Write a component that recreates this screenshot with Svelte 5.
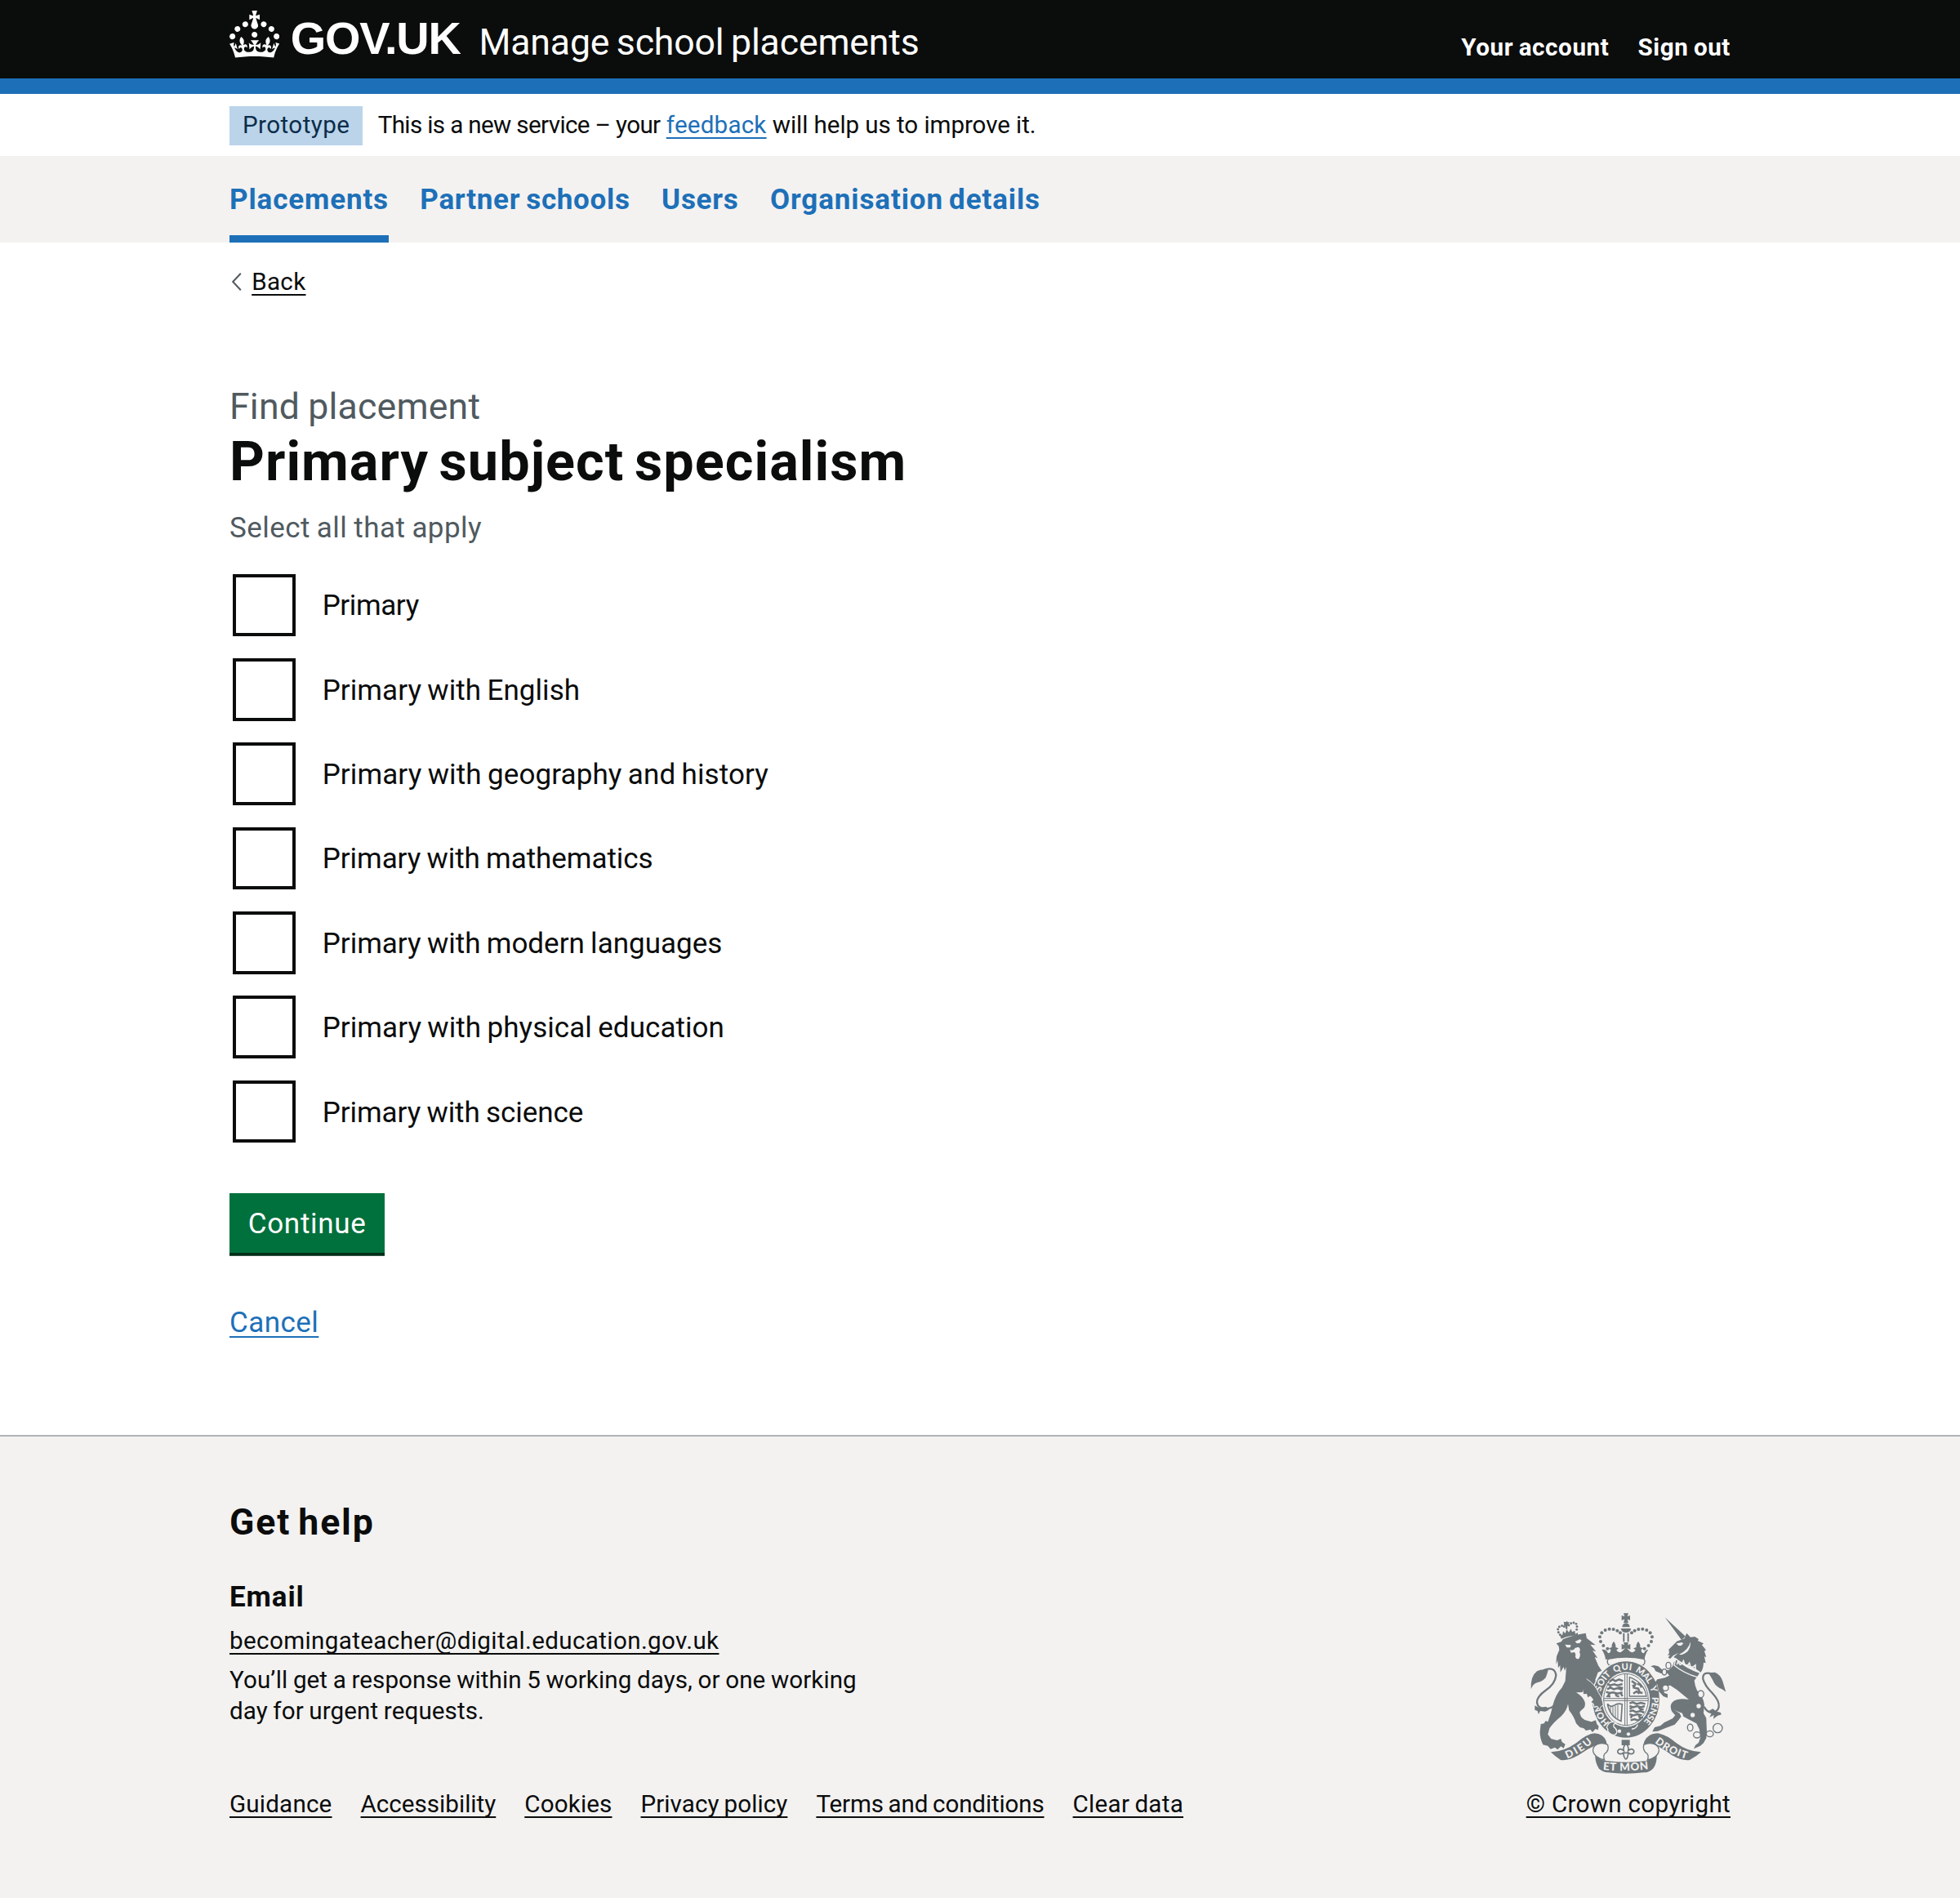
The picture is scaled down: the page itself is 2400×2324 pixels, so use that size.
<script>
  const accountLinks = ['Your account', 'Sign out'];

  // tracking: letter spacing in px, tuned per string
  const sections = [
    { label: 'Placements', tracking: 0.86, current: true },
    { label: 'Partner schools', tracking: 0.7 },
    { label: 'Users', tracking: 0.75 },
    { label: 'Organisation details', tracking: 0.88 }
  ];

  const specialisms = [
    { label: 'Primary', tracking: -0.4 },
    { label: 'Primary with English', tracking: 0.06 },
    { label: 'Primary with geography and history', tracking: 0.1 },
    { label: 'Primary with mathematics', tracking: -0.05 },
    { label: 'Primary with modern languages', tracking: 0 },
    { label: 'Primary with physical education', tracking: 0.06 },
    { label: 'Primary with science', tracking: -0.06 }
  ];

  const footerLinks = [
    { label: 'Guidance', tracking: 0.19 },
    { label: 'Accessibility', tracking: 0.01 },
    { label: 'Cookies', tracking: 0.15 },
    { label: 'Privacy policy', tracking: 0.07 },
    { label: 'Terms and conditions', tracking: -0.15 },
    { label: 'Clear data', tracking: 0.27 }
  ];

  // beads along the arches of the royal crown; mirrored about x = 453
  const beads = [
    [385, 175], [370, 164], [360, 149], [357, 132], [364, 117], [377, 107], [392, 103], [407, 104], [421, 109], [432, 117]
  ];
  const lionBeads = [
    [211, 124], [205, 115], [203, 104], [208, 95], [218, 91], [226, 94], [243, 89], [251, 82], [261, 80], [270, 84], [273, 94], [272, 105]
  ];
</script>

<div class="page">
  <header class="header">
    <div class="container header-row">
      <a class="logo" href="#home" aria-label="GOV.UK">
        <svg class="crown" viewBox="0 0 32 30" aria-hidden="true">
          <path fill="currentColor" d="M22.6 10.4c-1 .4-2-.1-2.4-1-.4-.9.1-2 1-2.4.9-.4 2 .1 2.4 1s-.1 2-1 2.4m-5.9 6.7c-.9.4-2-.1-2.4-1-.4-.9.1-2 1-2.4.9-.4 2 .1 2.4 1s-.1 2-1 2.4m10.8-3.7c-1 .4-2-.1-2.4-1-.4-.9.1-2 1-2.4.9-.4 2 .1 2.4 1s0 2-1 2.4m3.3 4.8c-1 .4-2-.1-2.4-1-.4-.9.1-2 1-2.4.9-.4 2 .1 2.4 1s-.1 2-1 2.4M17 4.7l2.3 1.2V2.5l-2.3.7-.2-.2.9-3h-3.4l.9 3-.2.2c-.1.1-2.3-.7-2.3-.7v3.4L15 4.7c.1.1.1.2.2.2l-1.3 4c-.1.2-.1.4-.1.6 0 1.1.8 2 1.9 2.2h.7c1-.2 1.9-1.1 1.9-2.1 0-.2 0-.4-.1-.6l-1.3-4c-.1-.2 0-.2.1-.3m-7.6 5.7c.9.4 2-.1 2.4-1 .4-.9-.1-2-1-2.4-.9-.4-2 .1-2.4 1s0 2 1 2.4m-5 3c.9.4 2-.1 2.4-1 .4-.9-.1-2-1-2.4-.9-.4-2 .1-2.4 1s.1 2 1 2.4m-3.2 4.8c.9.4 2-.1 2.4-1 .4-.9-.1-2-1-2.4-.9-.4-2 .1-2.4 1s0 2 1 2.4m14.8 11c4.4 0 8.6.3 12.3.8 1.1-4.5 2.4-7 3.7-8.8l-2.5-.9c.2 1.3.3 1.9 0 2.7-.4-.4-.8-1.1-1.1-2.3l-1.2 4c.7-.5 1.3-.8 2-.9-1.1 2.5-2.6 3.1-3.5 3-1.1-.2-1.7-1.2-1.5-2.1.3-1.2 1.5-1.5 2.1-.1 1.1-2.3-.8-3-2-2.3 1.9-1.9 2.1-3.5.6-5.6-2.1 1.6-2.1 3.2-1.2 5.5-1.2-1.4-3.2-.6-2.5 1.6.9-1.4 2.1-.5 1.9.8-.2 1.1-1.7 2.1-3.5 1.9-2.7-.2-2.9-2.1-2.9-3.6.7-.1 1.9.5 2.9 1.9l.4-4.3c-1.1 1.1-2.1 1.4-3.2 1.4.4-1.2 2.1-3 2.1-3h-5.4s1.7 1.9 2.1 3c-1.1 0-2.1-.2-3.2-1.4l.4 4.3c1-1.4 2.2-2 2.9-1.9-.1 1.5-.2 3.4-2.9 3.6-1.9.2-3.4-.8-3.5-1.9-.2-1.3 1-2.2 1.9-.8.7-2.3-1.2-3-2.5-1.6.9-2.2.9-3.9-1.2-5.5-1.5 2-1.3 3.7.6 5.6-1.2-.7-3.1 0-2 2.3.6-1.4 1.8-1.1 2.1.1.2.9-.3 1.9-1.5 2.1-.9.2-2.4-.5-3.5-3 .6 0 1.2.3 2 .9l-1.2-4c-.3 1.1-.7 1.9-1.1 2.3-.3-.8-.2-1.4 0-2.7l-2.9.9C1.3 23 2.6 25.5 3.7 30c3.7-.5 7.9-.8 12.3-.8" />
        </svg>
        <span class="wordmark">GOV.UK</span>
      </a>
      <a class="service" href="#service">Manage school placements</a>
      <nav class="account">
        {#each accountLinks as link}
          <a href="#account">{link}</a>
        {/each}
      </nav>
    </div>
  </header>

  <div class="container phase">
    <strong class="tag">Prototype</strong>
    <span class="phase-text"><span class="phase-a">This is a new service – your</span> <a class="link feedback" href="#feedback">feedback</a> will help us to improve it.</span>
  </div>

  <nav class="sections">
    <div class="container sections-row">
      {#each sections as s}
        <a class="section" class:current={s.current} href="#section" style:letter-spacing="{s.tracking}px">{s.label}</a>
      {/each}
    </div>
  </nav>

  <div class="container body">
    <div class="back">
      <svg class="chevron" viewBox="0 0 13 22" aria-hidden="true"><path d="M11.8 0.8 2.2 11l9.6 10.2" fill="none" stroke="#505a5f" stroke-width="2" /></svg>
      <a class="link dark" href="#back">Back</a>
    </div>

    <main>
      <span class="caption">Find placement</span>
      <h1>Primary subject specialism</h1>
      <p class="hint">Select all that apply</p>

      <div class="options">
        {#each specialisms as s}
          <label class="option">
            <input type="checkbox" />
            <span class="option-label" style:letter-spacing="{s.tracking}px">{s.label}</span>
          </label>
        {/each}
      </div>

      <button type="button">Continue</button>
      <p class="cancel"><a class="link" href="#cancel">Cancel</a></p>
    </main>
  </div>

  <footer>
    <div class="container footer-row">
      <div class="footer-main">
        <h2>Get help</h2>
        <h3>Email</h3>
        <p class="email"><a class="link dark" href="#email">becomingateacher@digital.education.gov.uk</a></p>
        <p class="response">You’ll get a response within 5 working days, or one working day for urgent requests.</p>
        <nav class="footer-links">
          {#each footerLinks as l}
            <a class="link dark" href="#footer" style:letter-spacing="{l.tracking}px">{l.label}</a>
          {/each}
        </nav>
      </div>

      <div class="copyright">
        <svg class="crest" viewBox="102 44 718 590" aria-hidden="true">
          <defs>
            <path id="garter" d="M453 471A96 109 0 0 1 357 362A96 109 0 0 1 453 253A96 109 0 0 1 549 362A96 109 0 0 1 453 471" />
            <path id="scroll-left" d="M237 579Q290 558 334 517" />
            <path id="scroll-mid" d="M368 620Q453 628 540 617" />
            <path id="scroll-right" d="M558 520Q609 562 675 580" />
          </defs>

          <!-- royal crown -->
          <g fill="#6f777b">
            <path d="M444 45h18l-4 12 10-4v18l-10-4 4 13h-18l4-13-11 4V53l11 4z" />
            <path d="M439 96q1-13 14-15q13 2 14 15z" />
            <path d="M434 101h38q-3 15-19 15t-19-15z" />
            {#each beads as [x, y]}
              <circle cx={x} cy={y} r="6" />
              <circle cx={906 - x} cy={y} r="6" />
            {/each}
            <path d="M442 118h6v32h-6zM458 118h6v32h-6z" />
            <path d="M371 178q12 2 16 14q10 0 10-13l-8-5 12-4q-2-10 7-22q9 12 7 22l11 4-8 6q6 14 20 6l12-12-13 4v-20l10 4-3-10h18l-3 10 10-4v20l-13-4 12 12q14 8 20-6l-8-6 11-4q-2-10 7-22q9 12 7 22l12 4-8 5q0 13 10 13q4-12 16-14q-13 20-14 37q-71-14-143 0q-1-17-14-37z" />
          </g>
          <path d="M388 213q65-14 131 0q8 12-3 23q-62-18-125 0q-11-11-3-23z" fill="#f3f2f1" stroke="#6f777b" stroke-width="4" />

          <!-- lion supporter -->
          <g fill="#6f777b">
            <path d="M215 139l-6-18 10 5 3-15 8 8 5-15 8 11 8-13 4 12 10-5 2 12 9-5v12q-30-3-61 11z" />
            <path d="M224 76l8 2 4-4 4 4 6 0-4 6 2 6-6 1 0 12-6 0-2-12-6 0 2-6z" />
            {#each lionBeads as [x, y]}
              <circle cx={x} cy={y} r="4.4" />
            {/each}
            <path d="M197 156L215 150L222 140Q262 124 305 118L309 137L320 145L341 162L322 160L343 186L330 182L349 210L338 206L352 238L364 256L350 262L340 290L352 320L300 335L270 336Q296 352 302 372Q306 390 290 400L283 408Q284 428 302 437L326 444L342 438L346 452L353 460L350 474L341 470L330 482L322 472L306 476L298 468L284 464L270 450Q262 424 244 402L240 378Q236 404 214 424Q186 446 172 468L166 490L178 506L200 512L214 506L218 518L230 526L224 541L214 534L202 546L192 538L176 544L166 532L148 528Q136 502 137 478L140 452L152 450L158 440L166 444Q178 414 184 384Q194 344 218 318L230 294L234 242L228 256L224 242L212 262L211 236L204 246L202 218L196 232L198 204L208 180L206 166z" />
            <path d="M104 324q-2-48 22-66q18-10 41-4q-4 16-9 28q-12 14-29 17q-18 4-25 25z" />
            <path d="M118 384l15 8 27-4 10 12-14 6-18-2-6 12-4-12-10-4z" />
          </g>
          <path d="M150 254q43-16 46 20q-4 32-38 54q-34 24-32 46q4 22 32 22q22-2 33-14" fill="none" stroke="#6f777b" stroke-width="7" />
          <g fill="#f3f2f1">
            <path d="M229 160l22 2-3 9-12 0zM266 149l17-8 7 3-6 10-11 2z" />
            <path d="M247 178q10 8 20-6l12-3q9 8 3 18q6 12-2 25q-9 4-13-7q3-12-4-17l-12 2z" />
          </g>

          <!-- garter and quartered shield -->
          <ellipse cx="453" cy="362" rx="125" ry="142" fill="#6f777b" stroke="#f3f2f1" stroke-width="4" />
          <ellipse cx="453" cy="362" rx="88" ry="101" fill="#f3f2f1" />
          <ellipse cx="453" cy="362" rx="82" ry="95" fill="none" stroke="#6f777b" stroke-width="3" />
          <path d="M449 268v188M457 268v188M371 358h164M371 366h164" stroke="#6f777b" stroke-width="3" />
          <g fill="none" stroke="#6f777b" stroke-width="7.5">
            <path d="M392 296l12-8 10 6 14-6 14 6M384 304l10 6 16-4 12 4 18-5M400 308l-6 10M424 308l6 10 12 2" />
            <path d="M384 324l12-6 12 6 14-4 18 6M380 334l12 4 14-2 16 4 18-4M394 338l-8 12 10 1M414 338l4 10 10 3M434 338l6 12" />
            <path d="M466 376l12-4 14 6 16-4 16 4M466 386l14 4 14-4 14 4 14-4M474 390l-6 8M500 390l6 8 12 0" />
            <path d="M466 406l12-4 12 6 16-4 14 6M466 416l14 4 16-4 16 4M476 420l-6 10M500 420l4 9 12 0M470 438l14-4 12 4 12-5" />
            <path d="M474 294l14 10-6 14 16 4 6 14 10 2M476 312l10-2M494 304l12 4 4 10M480 340l12-8 10 8" />
          </g>
          <path d="M466 280v70h62q-8-50-62-70z" fill="none" stroke="#6f777b" stroke-width="4" />
          <path d="M385 378q10 14 24 6q14-10 30-5l-4 62q-18-6-32-22q-14-18-18-41z" fill="none" stroke="#6f777b" stroke-width="5" />
          <path d="M396 388l0 22M405 388v32M414 386v42M423 382v50" stroke="#6f777b" stroke-width="3" />

          <g class="motto" fill="#f3f2f1" font-size="33">
            <text><textPath href="#garter" startOffset="66">HON</textPath></text>
            <text><textPath href="#garter" startOffset="190" textLength="74">SOIT</textPath></text>
            <text><textPath href="#garter" startOffset="278" textLength="64">QUI</textPath></text>
            <text><textPath href="#garter" startOffset="356" textLength="68">MAL</textPath></text>
            <text><textPath href="#garter" startOffset="436">Y</textPath></text>
            <text><textPath href="#garter" startOffset="474" textLength="98">PENSE</textPath></text>
          </g>
          <path d="M388 452q12-14 28-4q-10 4-8 14q10 6 12 18q-2 12-14 12q-16-4-20-16q2-6-4-12z" fill="#6f777b" stroke="#f3f2f1" stroke-width="4" />
          <path d="M474 470q16 0 22-16" fill="none" stroke="#f3f2f1" stroke-width="4" />
          <circle cx="429" cy="478" r="6.5" fill="#f3f2f1" />
          <circle cx="462" cy="489" r="6.5" fill="#f3f2f1" />

          <!-- lion's paw over the garter -->
          <path d="M290 300L308 286Q340 306 352 336L364 356L370 382L361 388L356 398L347 386L336 390L334 378L324 372L332 362L322 350L312 356L308 342L296 344z" fill="#6f777b" stroke="#f3f2f1" stroke-width="3" />
          <path d="M270 250L310 288L294 332L266 326z" fill="#6f777b" />

          <!-- unicorn supporter -->
          <g fill="#6f777b">
            <path d="M596 60L672 130L657 143z" />
            <path d="M610 178L640 148L668 138L676 118L690 133L706 131L720 140L717 146L738 156L732 162L747 180L741 184L748 206L741 204L746 228L738 226Q738 248 728 262Q712 248 690 240L660 226L628 206Q634 200 646 190L626 201L616 212L608 208L615 198L606 200L612 190z" />
            <path d="M630 222Q670 252 722 268L704 292Q706 310 714 328Q736 348 741 380L738 412L748 430L750 480L748 504L738 522L726 532L702 543L708 530L720 520L727 500L722 470L712 450L686 436L664 424L660 412Q634 404 622 396L650 412L656 424L646 438L632 454L596 468L570 478L550 480L558 464L580 458L594 446L624 432L634 420L622 406Q610 382 628 368Q646 356 684 362L640 326L616 310L602 312L592 326L594 338L606 342L606 356L590 350L574 332L568 306L558 302L568 288L596 282L612 274L606 266L582 266L562 258L556 246L544 240L556 236L572 240L588 254L610 254L624 240z" />
            <path d="M756 264l24-2q20 8 28 32l12 40q-10-10-24-15q-18-10-24-28z" />
            <path d="M772 396l14 10 14 3 4 8-14 4-16 12 2-14-16 8 8-16-10-8z" />
          </g>
          <path d="M770 268q-36-12-34 18q6 24 34 52q28 30 24 52q-4 16-20 20q-22 2-34-22" fill="none" stroke="#6f777b" stroke-width="7" />
          <path d="M638 156l20-4 6 4-8 8-10 0zM690 150q2 38-34 48l-8-2q34-14 42-46z" fill="#f3f2f1" />
          <path d="M636 212q36 34 90 52l-10 16q-50-14-86-44z" fill="#6f777b" stroke="#f3f2f1" stroke-width="4" />
          <path d="M640 234l4-12 8 12 8-4 4-10 6 16 10 0 6-8 4 14 10 0 8-6 0 14" fill="none" stroke="#f3f2f1" stroke-width="5" />
          <g fill="#f3f2f1" stroke="#6f777b" stroke-width="4">
            <ellipse cx="609" cy="237" rx="9" ry="12" />
            <ellipse cx="594" cy="261" rx="8" ry="11" />
            <ellipse cx="598" cy="319" rx="11" ry="11" />
            <ellipse cx="728" cy="342" rx="11" ry="13" />
            <ellipse cx="689" cy="465" rx="10" ry="13" />
            <ellipse cx="714" cy="492" rx="13" ry="11" />
            <ellipse cx="761" cy="488" rx="13" ry="11" />
            <circle cx="790" cy="467" r="17" />
          </g>
          <circle cx="720" cy="386" r="8" fill="#f3f2f1" />
          <circle cx="698" cy="419" r="8" fill="#f3f2f1" />

          <!-- motto scroll -->
          <g fill="#6f777b">
            <path d="M177 555q50-2 94-34q38-32 66-35q42 4 46 42q-22-10-38 0q-34 16-66 38q-38 22-66 18q-20-12-36-29z" />
            <path d="M729 555q-50-2-92-34q-38-32-70-35q-42 4-50 42q22-10 42 0q34 16 62 38q38 22 66 18q24-12 42-29z" />
            <path d="M340 562q12 22 44 26q68 8 140 0q30-6 42-26q2 34-14 54q-14 14-34 14q-66 8-130 0q-20-2-34-14q-16-24-14-54z" />
          </g>
          <g fill="#f3f2f1" stroke="#6f777b" stroke-width="4">
            <path d="M386 528q6 22-10 32q-8 8-2 24q-38-10-42-32q-2-18 16-26q20-8 38 2z" />
            <path d="M518 528q-4 22 12 32q8 8 2 24q38-10 42-32q2-18-16-26q-20-8-40 2z" />
          </g>
          <g class="motto" fill="#f3f2f1">
            <text font-size="38"><textPath href="#scroll-left" textLength="110">DIEU</textPath></text>
            <text font-size="40"><textPath href="#scroll-mid" textLength="168">ET MON</textPath></text>
            <text font-size="38"><textPath href="#scroll-right" textLength="132">DROIT</textPath></text>
          </g>

          <!-- badge -->
          <path d="M437 510h30v20h-30z" fill="#6f777b" />
          <path d="M453 524q12 12 8 26q14-12 21 0q2 10-8 12q-8 0-12-4l-3 14q-6 18-13 0l-3-14q-4 4-12 4q-10-2-8-12q7-12 22 0q-4-14 8-26z" fill="#f3f2f1" stroke="#6f777b" stroke-width="5" />
          <path d="M441 558h24" stroke="#6f777b" stroke-width="5" />
        </svg>
        <a class="link dark crown-copyright" href="#copyright">© Crown copyright</a>
      </div>
    </div>
  </footer>
</div>

<style>
  :global(body) {
    margin: 0;
    background: #fff;
  }
  .page {
    display: flex;
    flex-direction: column;
    min-height: 2324px;
    color: #0b0c0c;
    font-family: Roboto, "Liberation Sans", sans-serif;
    font-size: 29.6px;
    font-kerning: normal;
  }
  .container {
    box-sizing: border-box;
    width: 1838px;
    margin: 0 auto;
  }
  a {
    color: inherit;
    text-decoration: none;
  }
  p, h1, h2, h3 {
    margin: 0;
  }
  .link {
    color: #1d70b8;
    text-decoration: underline;
    text-decoration-thickness: 2px;
    text-decoration-skip-ink: none;
    text-underline-offset: 5px;
  }
  .link.dark {
    color: #0b0c0c;
  }

  .header {
    background: #0b0c0c;
    border-bottom: 19px solid #1d70b8;
    color: #fff;
  }
  .header-row {
    display: flex;
    align-items: flex-start;
    height: 96px;
  }
  .logo {
    display: flex;
    gap: 13.4px;
    padding-top: 13px;
  }
  .crown {
    width: 61.3px;
    height: 57.5px;
  }
  .wordmark {
    padding-top: 4px;
    font: 700 55.9px/60px "Liberation Sans", sans-serif;
    letter-spacing: -1.24px;
  }
  .service {
    margin-left: 22.8px;
    padding-top: 31.5px;
    font-size: 44.6px;
    line-height: 40px;
    letter-spacing: -0.15px;
    word-spacing: -2.4px;
  }
  .account {
    display: flex;
    gap: 35px;
    margin-left: auto;
    padding-top: 40px;
    font-weight: 700;
    line-height: 36px;
    letter-spacing: 0.6px;
    word-spacing: -1.4px;
  }

  .phase {
    display: flex;
    align-items: center;
    gap: 19.2px;
    height: 76px;
    padding-top: 1px;
  }
  .tag {
    box-sizing: border-box;
    width: 162.5px;
    height: 48px;
    padding-left: 16px;
    background: #bbd4ea;
    color: #0c2d4a;
    font-weight: 400;
    line-height: 47px;
    letter-spacing: 0.42px;
  }
  .phase-text {
    line-height: 47px;
    padding-bottom: 1px;
    letter-spacing: -0.08px;
  }
  .phase-a {
    letter-spacing: -0.64px;
  }
  .feedback {
    letter-spacing: 0.2px;
  }

  .sections {
    background: #f3f2f1;
  }
  .sections-row {
    display: flex;
    gap: 38.4px;
    height: 105.6px;
  }
  .section {
    box-sizing: border-box;
    height: 105.6px;
    padding-top: 11.4px;
    border-bottom: 9.6px solid transparent;
    color: #1d70b8;
    font-size: 35px;
    font-weight: 700;
    line-height: 86px;
    word-spacing: -2.4px;
  }
  .section.current {
    border-bottom-color: #1d70b8;
  }

  .back {
    display: flex;
    align-items: center;
    padding: 30.4px 0 0 2px;
    line-height: 36px;
    letter-spacing: 0.32px;
  }
  .chevron {
    width: 13px;
    height: 22px;
    margin-right: 12.2px;
  }

  main {
    padding-top: 110.5px;
  }
  .caption {
    display: block;
    color: #505a5f;
    font-size: 44.6px;
    line-height: 50px;
    letter-spacing: 0.2px;
    word-spacing: -1px;
  }
  h1 {
    margin-top: 9px;
    font-size: 66.6px;
    line-height: 66px;
    letter-spacing: 1.04px;
    word-spacing: -5px;
  }
  .hint {
    margin-top: 25px;
    color: #505a5f;
    font-size: 35px;
    line-height: 48px;
    letter-spacing: 0.43px;
    word-spacing: -1px;
  }
  .options {
    display: flex;
    flex-direction: column;
    gap: 19.15px;
    margin-top: 27.3px;
  }
  .option {
    display: flex;
    align-items: center;
    gap: 33.2px;
    height: 84.23px;
    font-size: 35px;
  }
  .option-label {
    padding-top: 2px;
    word-spacing: -1.4px;
  }
  input {
    appearance: none;
    box-sizing: border-box;
    width: 76.5px;
    height: 76.5px;
    margin: 0 0 0 4px;
    border: 4px solid #0b0c0c;
    background: #fff;
  }
  button {
    display: block;
    height: 72.7px;
    margin: 58px 0 0;
    padding: 2.6px 22.7px 0;
    border: 0;
    background: #00703c;
    box-shadow: 0 3.8px 0 #002d18;
    color: #fff;
    font: 400 35px/70px Roboto, "Liberation Sans", sans-serif;
    letter-spacing: 0.71px;
  }
  .cancel {
    margin-top: 62.2px;
    font-size: 35px;
    line-height: 48px;
    letter-spacing: 0.46px;
  }

  footer {
    flex: 1;
    margin-top: 112.8px;
    border-top: 2px solid #b1b4b6;
    background: #f3f2f1;
  }
  .footer-row {
    display: flex;
    justify-content: space-between;
    align-items: flex-end;
    padding-top: 80.6px;
  }
  h2 {
    font-size: 44.6px;
    line-height: 50px;
    letter-spacing: 1.9px;
    word-spacing: -4px;
  }
  h3 {
    margin-top: 43px;
    font-size: 35px;
    line-height: 48px;
    letter-spacing: 0.9px;
  }
  .email {
    margin-top: 10px;
    line-height: 38px;
    letter-spacing: 0.37px;
  }
  .response {
    width: 800px;
    margin-top: 9.4px;
    line-height: 38.3px;
    letter-spacing: 0.09px;
    word-spacing: -0.9px;
  }
  .footer-links {
    display: flex;
    gap: 35px;
    margin-top: 76px;
    line-height: 38.3px;
    word-spacing: -1.4px;
  }
  .copyright {
    display: flex;
    flex-direction: column;
    align-items: center;
    gap: 18.5px;
  }
  .crest {
    width: 239.3px;
    height: 196.7px;
  }
  .crown-copyright {
    line-height: 38.3px;
    letter-spacing: 0.31px;
  }
  .motto {
    font-family: Lato, "Liberation Sans", sans-serif;
    font-weight: 900;
  }
</style>
